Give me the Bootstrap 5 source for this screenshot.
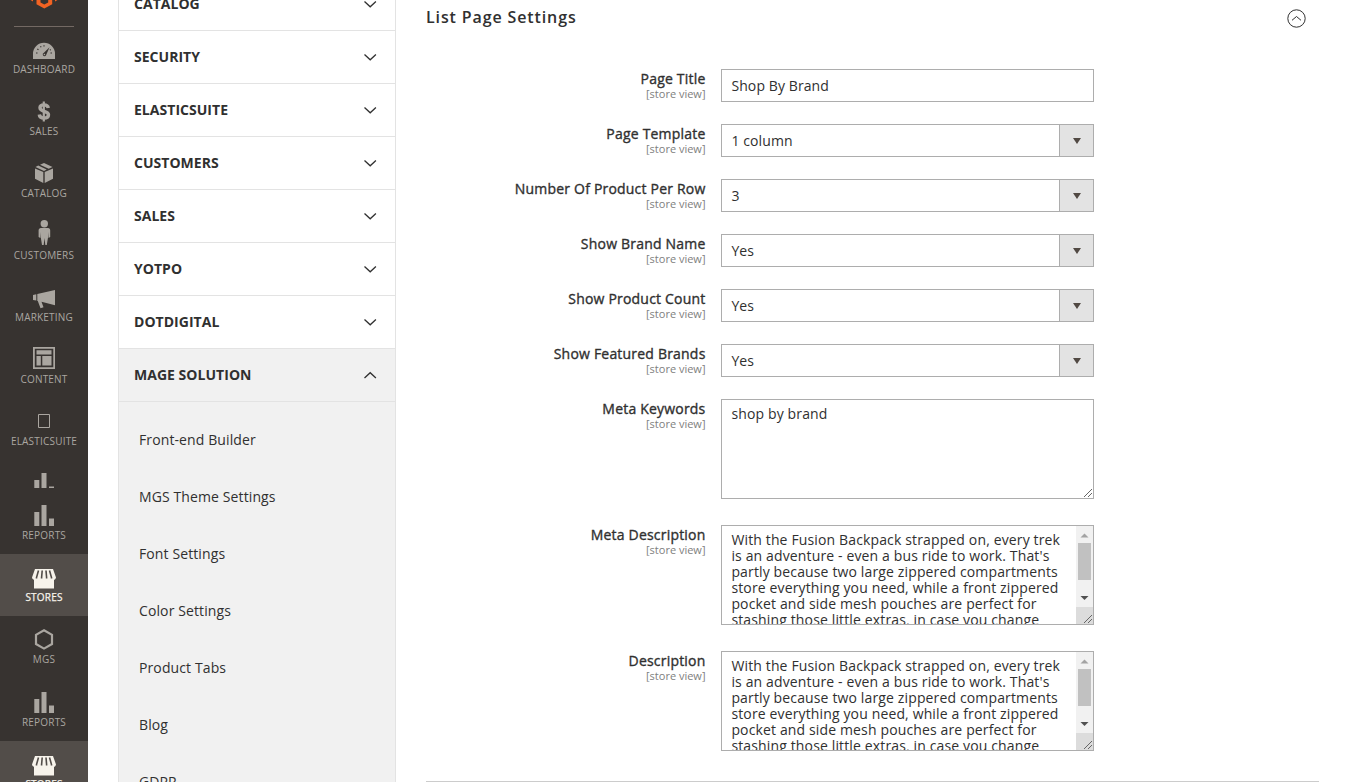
<!DOCTYPE html>
<html lang="en">
<head>
<meta charset="utf-8">
<title>List Page Settings</title>
<link href="https://cdn.jsdelivr.net/npm/bootstrap@5.3.0/dist/css/bootstrap.min.css" rel="stylesheet">
<style>
body{font-family:"Open Sans","Noto Sans",sans-serif;font-size:14px;color:#303030;line-height:1.36;height:782px;overflow:hidden;background:#fff}
.admin-menu{width:88px;background:#373330;color:#aaa6a0;overflow:hidden}
.menu-logo{height:26px;flex:none;padding:0 14px 0}
.menu-logo svg{display:block;margin:0 auto}
.menu-rule{height:1px;background:#736963;margin-top:16px}
.menu-item{height:62px;flex:none;padding-top:12px;font-size:10px;line-height:14px;color:#aaa6a0;text-decoration:none;text-transform:uppercase;letter-spacing:.2px;white-space:nowrap}
.menu-item svg{width:28px;height:24px;fill:currentColor;display:block;flex:none;overflow:visible}
.menu-item.active{background:#524d49;color:#f7f3eb}
.menu-item.active span{-webkit-text-stroke:.25px}
.menu-item.stub{height:28px;margin-bottom:4px;overflow:hidden}
.config-nav{width:278px;margin-left:30px;margin-top:-23px;border:1px solid #e3e3e3}
.section-head{height:53px;flex:none;border-bottom:1px solid #e3e3e3;padding:0 18px 0 15px;font-weight:700;letter-spacing:.03px;background:#fff}
.section-head.open,.sub-list{background:#f1f1f1}
.section-head svg{width:14px;height:8px;fill:none;stroke:#303030;stroke-width:1.3}
.sub-list{padding:9px 0 0 20px;height:600px;letter-spacing:.11px}
.sub-list a{height:57px;color:#303030;text-decoration:none}
.settings{width:893px;margin-left:30px;flex:none}
.settings-head{height:35px;margin-bottom:34px;padding-right:13px}
.settings-head h2{font-size:16px;font-weight:600;letter-spacing:.88px;margin:-2px 0 0;line-height:22px}
.settings-head svg{width:19px;height:19px;fill:none;stroke:#303030;margin-top:1px}
.field-row{margin-bottom:22px}
.field-row.tall{margin-bottom:26px}
.field-label{width:279.500px;margin-right:15.500px;font-weight:500;letter-spacing:.2px;line-height:19px;text-align:right;-webkit-text-stroke:.35px #303030}
.scope{font-size:11px;line-height:12px;font-weight:400;letter-spacing:0;color:#808080;-webkit-text-stroke:0}
.field-box{width:373px;height:33px;border:1px solid #adadad;border-radius:0;padding:0 0 0 9.400px;font-size:14px;letter-spacing:.1px;color:#303030;line-height:31px;background:#fff;display:flex}
.arrow-cell{width:34px;border-left:1px solid #adadad;background:#e3e3e3}
.arrow-cell i{border:4.500px solid transparent;border-top:6px solid #514943;border-bottom:0;margin-top:1px}
.tall .field-box{height:100px;line-height:16px;letter-spacing:.14px;position:relative;overflow:hidden}
.area-text{padding-top:6px;white-space:pre}
.scroller{width:17px;background:#f1f1f1}
.scroller svg,.grip{display:block}
.grip{position:absolute;right:0;bottom:0}
.end-rule{height:1px;background:#ccc;margin-top:30px}
</style>
</head>
<body>
<svg class="d-none">
<symbol id="bars" viewBox="0 0 28 24"><path d="M4.300 8h5v14h-5zM11.500 1h5v21h-5zM19 14.500h5V22h-5z"/></symbol>
<symbol id="store" viewBox="0 0 28 24"><path d="M5 3h18l3 8.500c-.4 1.700-1.200 2.200-2 2.300v8.700H4v-8.700c-.9-.2-1.700-.9-2-2.300z"/><path d="M8.500 4.500L6.500 11.500v1M12.200 4.500l-.6 7v1M16 4.500l.6 7v1M19.500 4.500l2 7v1" fill="none" stroke="#524d49" stroke-width="1.600"/></symbol>
<symbol id="down" viewBox="0 0 14 8"><path d="M1.500 1.500L7.200 6.800 12.900 1.500"/></symbol>
<symbol id="up" viewBox="0 0 14 8"><path d="M1.500 7L7.200 1.700 12.900 7"/></symbol>
</svg>
<div class="d-flex h-100">
<nav class="admin-menu d-flex flex-column flex-shrink-0">
  <div class="menu-logo"><svg width="32" height="10" viewBox="0 0 32 10"><g fill="#f26322"><path d="M2.500 0h2.500v1.500zM29.500 0h-2.500v1.500zM8.500 0h4v2.400L16.300 4.600 20.200 2.400V0h4v4.300l-7.900 4.300-7.800-4.300z"/></g></svg><div class="menu-rule"></div></div>
  <a class="menu-item d-flex flex-column align-items-center" href="#"><svg viewBox="0 0 28 24"><path d="M3 21v-5.200a11 11 0 0 1 22 0V21z"/><path d="M6 15h1.500M7.300 11l1.200.8M10.500 8.300l.6 1M14 7.200v1.300M22 15h-1.500M20.800 11.600l-1 .4" stroke="#373330" stroke-width="1.200"/><path d="M19.500 9.300l-3.600 8.200c-1 1.700-3.900.3-3-1.700z" fill="#373330"/><circle cx="14.400" cy="16.500" r=".8"/></svg><span>Dashboard</span></a>
  <a class="menu-item d-flex flex-column align-items-center" href="#"><svg viewBox="0 0 28 24"><path d="M13.800 1.500v20" stroke="currentColor" stroke-width="2.200"/><path d="M18.300 8C17.900 5.500 16.300 4.900 14 4.900c-2.700 0-4 1.100-4 2.900 0 4.600 8.500 2.400 8.500 7 0 2.200-1.800 3.300-4.500 3.300-2.800 0-4.500-1.200-4.700-3.600" fill="none" stroke="currentColor" stroke-width="3.400"/></svg><span>Sales</span></a>
  <a class="menu-item d-flex flex-column align-items-center" href="#"><svg viewBox="0 0 28 24"><g transform="translate(0 -.8)"><path d="M5 7.200l8.300 3.700v10.800L5 17.500zM14.700 10.900L23 7.200v10.300l-8.300 4.200zM5.500 5.700l2.700-1.300 8.500 3.900-2.700 1.400zM10 3.600L14 1.700l8.500 4-3.800 1.800z"/></g></svg><span>Catalog</span></a>
  <a class="menu-item d-flex flex-column align-items-center" href="#"><svg viewBox="0 0 28 24"><g transform="translate(0 -4)"><circle cx="14.300" cy="3.800" r="3.700"/><path d="M11 8h7c1.500 0 2.200 1 2.200 2.300v6.800l-1.700 1v-6.200l-.4 5-1.300 8h-1.500l-.8-6.900-.8 6.900h-1.700L10.700 16.900l-.4-5v6.200l-1.700-1v-6.800C8.600 9 9.500 8 11 8z"/></g></svg><span>Customers</span></a>
  <a class="menu-item d-flex flex-column align-items-center" href="#"><svg viewBox="0 0 28 24"><g transform="translate(0 -3)"><path d="M3 12l3.300-.7v6.200L3 17zM7.300 11L25 7v15.300l-13.500-3.600 2 5.500-3 1-2.700-7.200h-.5z"/></g></svg><span>Marketing</span></a>
  <a class="menu-item d-flex flex-column align-items-center" href="#"><svg viewBox="0 0 28 24"><path transform="translate(0 -2)" fill-rule="evenodd" d="M3 1h22v22H3zM4.800 2.700v18.500h18.500V2.700zM6.500 4.200h15v4.300h-15zM6.500 10h4.300v9.500H6.500zM12.300 10h9.200v9.500h-9.200z"/></svg><span>Content</span></a>
  <a class="menu-item d-flex flex-column align-items-center" href="#"><svg viewBox="0 0 28 24"><path d="M8.500 4.500h11v13h-11z" fill="none" stroke="currentColor"/></svg><span>Elasticsuite</span></a>
  <a class="menu-item stub d-flex flex-column align-items-center" href="#"><svg><use href="#bars"/></svg></a>
  <a class="menu-item d-flex flex-column align-items-center" href="#"><svg><use href="#bars"/></svg><span>Reports</span></a>
  <a class="menu-item active d-flex flex-column align-items-center" href="#"><svg><use href="#store"/></svg><span>Stores</span></a>
  <a class="menu-item d-flex flex-column align-items-center" href="#"><svg viewBox="0 0 28 24"><path d="M14 2.200l8 4.600v9.200l-8 4.600-8-4.600V6.800z" fill="none" stroke="currentColor" stroke-width="2.200"/></svg><span>MGS</span></a>
  <a class="menu-item d-flex flex-column align-items-center" style="margin-top:1px" href="#"><svg><use href="#bars"/></svg><span>Reports</span></a>
  <a class="menu-item active d-flex flex-column align-items-center" href="#"><svg><use href="#store"/></svg><span>Stores</span></a>
</nav>
<aside class="config-nav flex-shrink-0 d-flex flex-column">
  <div class="section-head d-flex align-items-center justify-content-between"><span>CATALOG</span><svg><use href="#down"/></svg></div>
  <div class="section-head d-flex align-items-center justify-content-between"><span>SECURITY</span><svg><use href="#down"/></svg></div>
  <div class="section-head d-flex align-items-center justify-content-between"><span>ELASTICSUITE</span><svg><use href="#down"/></svg></div>
  <div class="section-head d-flex align-items-center justify-content-between"><span>CUSTOMERS</span><svg><use href="#down"/></svg></div>
  <div class="section-head d-flex align-items-center justify-content-between"><span>SALES</span><svg><use href="#down"/></svg></div>
  <div class="section-head d-flex align-items-center justify-content-between"><span>YOTPO</span><svg><use href="#down"/></svg></div>
  <div class="section-head d-flex align-items-center justify-content-between"><span>DOTDIGITAL</span><svg><use href="#down"/></svg></div>
  <div class="section-head open d-flex align-items-center justify-content-between"><span>MAGE SOLUTION</span><svg><use href="#up"/></svg></div>
  <div class="sub-list d-flex flex-column">
    <a class="d-flex align-items-center" href="#">Front-end Builder</a>
    <a class="d-flex align-items-center" href="#">MGS Theme Settings</a>
    <a class="d-flex align-items-center" href="#">Font Settings</a>
    <a class="d-flex align-items-center" href="#">Color Settings</a>
    <a class="d-flex align-items-center" href="#">Product Tabs</a>
    <a class="d-flex align-items-center" href="#">Blog</a>
    <a class="d-flex align-items-center" href="#">GDPR</a>
  </div>
</aside>
<main class="settings">
  <div class="settings-head d-flex align-items-center justify-content-between"><h2>List Page Settings</h2><svg viewBox="0 0 19 19"><circle cx="9.500" cy="9.500" r="8.700"/><path d="M5 11.300l4.500-3.800 4.500 3.800"/></svg></div>
  <div class="field-row d-flex"><div class="field-label">Page Title<div class="scope">[store view]</div></div><div class="field-box form-control">Shop By Brand</div></div>
  <div class="field-row d-flex"><div class="field-label">Page Template<div class="scope">[store view]</div></div><div class="field-box justify-content-between">1 column<span class="arrow-cell d-flex align-items-center justify-content-center"><i></i></span></div></div>
  <div class="field-row d-flex"><div class="field-label">Number Of Product Per Row<div class="scope">[store view]</div></div><div class="field-box justify-content-between">3<span class="arrow-cell d-flex align-items-center justify-content-center"><i></i></span></div></div>
  <div class="field-row d-flex"><div class="field-label">Show Brand Name<div class="scope">[store view]</div></div><div class="field-box justify-content-between">Yes<span class="arrow-cell d-flex align-items-center justify-content-center"><i></i></span></div></div>
  <div class="field-row d-flex"><div class="field-label">Show Product Count<div class="scope">[store view]</div></div><div class="field-box justify-content-between">Yes<span class="arrow-cell d-flex align-items-center justify-content-center"><i></i></span></div></div>
  <div class="field-row d-flex"><div class="field-label">Show Featured Brands<div class="scope">[store view]</div></div><div class="field-box justify-content-between">Yes<span class="arrow-cell d-flex align-items-center justify-content-center"><i></i></span></div></div>
  <div class="field-row tall d-flex"><div class="field-label">Meta Keywords<div class="scope">[store view]</div></div><div class="field-box"><div class="area-text">shop by brand</div><svg class="grip" width="10" height="10"><path d="M1 9L9 1M5 9l4-4" stroke="#666"/></svg></div></div>
  <div class="field-row tall d-flex"><div class="field-label">Meta Description<div class="scope">[store view]</div></div><div class="field-box justify-content-between"><div class="area-text">With the Fusion Backpack strapped on, every trek
is an adventure - even a bus ride to work. That's
partly because two large zippered compartments
store everything you need, while a front zippered
pocket and side mesh pouches are perfect for
stashing those little extras, in case you change</div><div class="scroller"><svg width="17" height="98"><path d="M2 17h13v37H2z" fill="#c1c1c1"/><path d="M4.500 11.500l4-4 4 4z" fill="#a3a3a3"/><path d="M4.500 70l4 4 4-4z" fill="#505050"/><path d="M0 81h17v17H0z" fill="#dcdcdc"/><path d="M8 97l8-8M12 97l4-4" stroke="#666"/></svg></div></div></div>
  <div class="field-row tall d-flex"><div class="field-label">Description<div class="scope">[store view]</div></div><div class="field-box justify-content-between"><div class="area-text">With the Fusion Backpack strapped on, every trek
is an adventure - even a bus ride to work. That's
partly because two large zippered compartments
store everything you need, while a front zippered
pocket and side mesh pouches are perfect for
stashing those little extras, in case you change</div><div class="scroller"><svg width="17" height="98"><path d="M2 17h13v37H2z" fill="#c1c1c1"/><path d="M4.500 11.500l4-4 4 4z" fill="#a3a3a3"/><path d="M4.500 70l4 4 4-4z" fill="#505050"/><path d="M0 81h17v17H0z" fill="#dcdcdc"/><path d="M8 97l8-8M12 97l4-4" stroke="#666"/></svg></div></div></div>
  <div class="end-rule"></div>
</main>
</div>
<script src="https://cdn.jsdelivr.net/npm/bootstrap@5.3.0/dist/js/bootstrap.bundle.min.js"></script>
</body>
</html>
